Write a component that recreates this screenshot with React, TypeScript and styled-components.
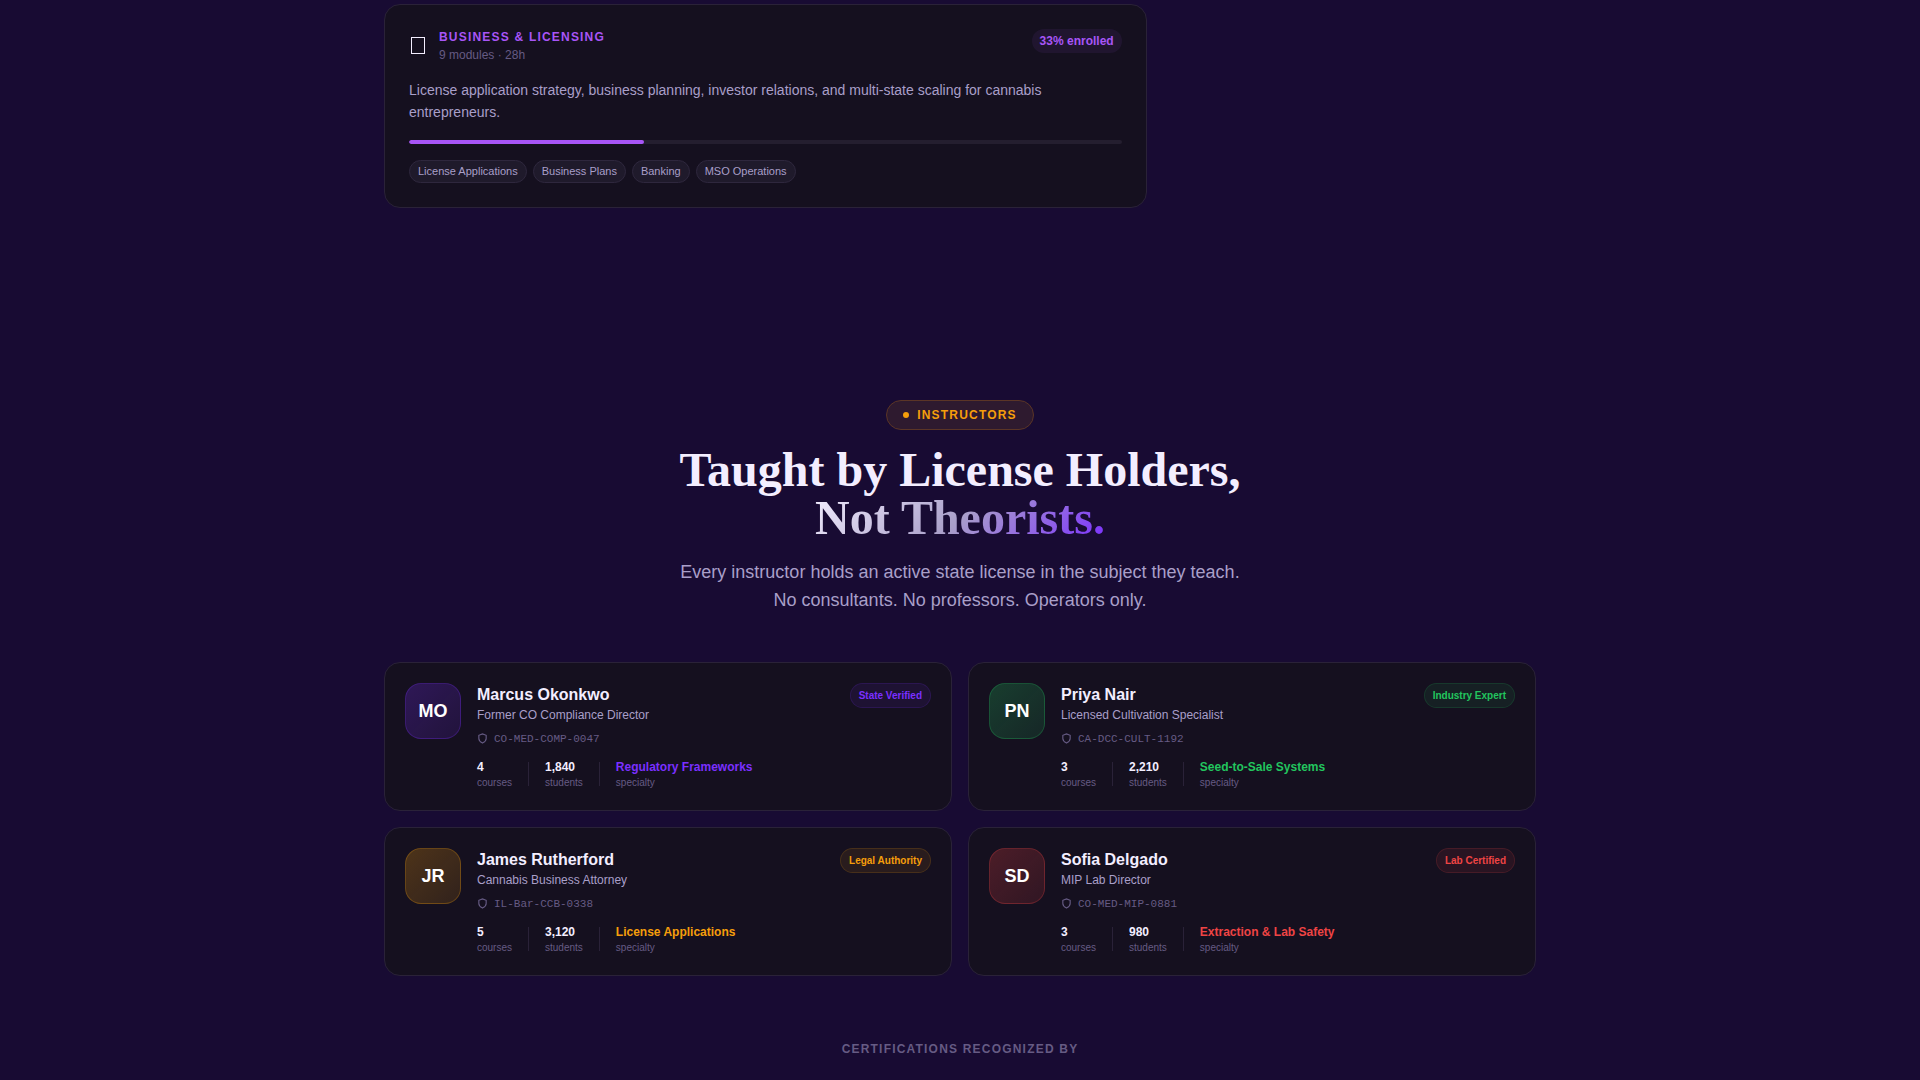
import React from "react";
import styled, { createGlobalStyle } from "styled-components";

const Global = createGlobalStyle`
  *, *::before, *::after { box-sizing: border-box; }
  html { background: #180b33; }
  body {
    margin: 0;
    color: #f3eeff;
    font-family: "Liberation Sans", Arial, sans-serif;
    overflow: hidden;
  }
  h2, h3, p, ul, dl, dd { margin: 0; padding: 0; }
`;

const Page = styled.main`
  max-width: 1200px;
  margin: 0 auto;
  padding: 4px 24px 20px;
`;

const TrackGrid = styled.section`
  display: grid;
  grid-template-columns: repeat(3, 1fr);
  gap: 16px;
`;

const Card = styled.article`
  background: #15101f;
  border: 1px solid #2a2238;
  border-radius: 16px;
`;

const TrackCard = styled(Card)`
  grid-column: span 2;
  padding: 24px;
`;

const TrackHeader = styled.header`
  display: flex;
  justify-content: space-between;
  align-items: flex-start;
  height: 34px;
  margin-bottom: 16px;
`;

const TrackTitle = styled.div`
  display: flex;
  align-items: center;
  gap: 12px;
`;

const TrackIcon = styled.span`
  width: 14px;
  height: 17px;
  margin: 0 2px 2px;
  border: 1px solid #f3eeff;
`;

const TrackLabels = styled.div`
  display: grid;
  gap: 2px;
`;

const TrackName = styled.h3`
  font-size: 12px;
  line-height: 16px;
  letter-spacing: 0.1em;
  color: #a855f7;
  text-transform: uppercase;
`;

const TrackMeta = styled.p`
  font-size: 12px;
  line-height: 16px;
  color: #665b84;
`;

const Enrolled = styled.span`
  padding: 3px 8px;
  border-radius: 12px;
  background: rgba(168, 85, 247, 0.08);
  color: #a855f7;
  font-size: 12px;
  font-weight: 700;
  line-height: 18px;
`;

const TrackText = styled.p`
  margin-bottom: 16px;
  font-size: 14px;
  line-height: 1.6;
  color: #a99fc9;
`;

const Progress = styled.div`
  height: 4px;
  margin-bottom: 16px;
  border-radius: 2px;
  background: #241e2f;
  overflow: hidden;
`;

const ProgressFill = styled.div`
  height: 100%;
  border-radius: 2px;
  background: #a855f7;
`;

const Tags = styled.ul`
  display: flex;
  flex-wrap: wrap;
  gap: 6px;
  list-style: none;
`;

const Tag = styled.li`
  padding: 2px 8px;
  border: 1px solid #2e273d;
  border-radius: 12px;
  background: #1f1a2b;
  color: #a99fc9;
  font-size: 11px;
  line-height: 17px;
`;

const Intro = styled.header`
  display: flex;
  flex-direction: column;
  align-items: center;
  margin: 192px 0 48px;
  text-align: center;
`;

const Eyebrow = styled.span`
  display: inline-flex;
  align-items: center;
  gap: 8px;
  margin-bottom: 16px;
  padding: 5px 16px;
  border: 1px solid #5b3526;
  border-radius: 15px;
  background: #2e1a2f;
  color: #f59e0b;
  font-size: 12px;
  font-weight: 700;
  line-height: 18px;
  letter-spacing: 0.1em;
  text-transform: uppercase;
`;

const Dot = styled.span`
  width: 6px;
  height: 6px;
  border-radius: 50%;
  background: currentColor;
`;

const Heading = styled.h2`
  margin-bottom: 16px;
  font-family: "Liberation Serif", "Times New Roman", serif;
  font-size: 48px;
  line-height: 48px;
`;

const Fade = styled.span`
  background: linear-gradient(135deg, #f3eeff 0%, #a99fc9 50%, #7b2fff 100%);
  background-clip: text;
  -webkit-background-clip: text;
  color: transparent;
`;

const Lead = styled.p`
  font-size: 18px;
  line-height: 28px;
  color: #a99fc9;
`;

const People = styled.section`
  display: grid;
  grid-template-columns: repeat(2, 1fr);
  gap: 16px;
`;

const PersonCard = styled(Card)`
  display: flex;
  align-items: flex-start;
  gap: 16px;
  padding: 20px;
`;

const Avatar = styled.div<{ $rgb: string }>`
  display: flex;
  align-items: center;
  justify-content: center;
  flex: none;
  width: 56px;
  height: 56px;
  border: 1px solid rgba(${(p) => p.$rgb}, 0.25);
  border-radius: 16px;
  background: linear-gradient(135deg, rgba(${(p) => p.$rgb}, 0.25), rgba(${(p) => p.$rgb}, 0.13));
  color: #ffffff;
  font-size: 18px;
  font-weight: 700;
  line-height: 28px;
`;

const Details = styled.div`
  flex: 1;
  min-width: 0;
`;

const PersonTop = styled.div`
  display: flex;
  justify-content: space-between;
  align-items: flex-start;
`;

const PersonName = styled.h3`
  font-size: 16px;
  line-height: 24px;
`;

const Role = styled.p`
  font-size: 12px;
  line-height: 16px;
  color: #a99fc9;
`;

const Badge = styled.span<{ $rgb: string }>`
  padding: 4px 8px;
  border: 1px solid rgba(${(p) => p.$rgb}, 0.15);
  border-radius: 13px;
  background: rgba(${(p) => p.$rgb}, 0.09);
  color: rgb(${(p) => p.$rgb});
  font-size: 10px;
  font-weight: 700;
  line-height: 15px;
`;

const License = styled.p`
  display: flex;
  align-items: center;
  gap: 6px;
  margin: 6px 0 10px;
  color: #665b84;
  font-family: "Liberation Mono", monospace;
  font-size: 11px;
  line-height: 20px;
`;

const Stats = styled.dl`
  display: flex;
  align-items: center;
  gap: 16px;
`;

const Stat = styled.div`
  display: flex;
  flex-direction: column-reverse;
`;

const StatValue = styled.dd<{ $rgb?: string }>`
  color: ${(p) => (p.$rgb ? `rgb(${p.$rgb})` : "#f3eeff")};
  font-size: 12px;
  font-weight: 700;
  line-height: 16px;
`;

const StatLabel = styled.dt`
  color: #665b84;
  font-size: 10px;
  line-height: 15px;
`;

const Rule = styled.div`
  width: 1px;
  height: 24px;
  background: #2a2238;
`;

const Recognized = styled.p`
  margin-top: 64px;
  color: #665b84;
  font-size: 12px;
  font-weight: 700;
  line-height: 18px;
  letter-spacing: 0.1em;
  text-align: center;
  text-transform: uppercase;
`;

const TOPICS = ["License Applications", "Business Plans", "Banking", "MSO Operations"];
const ENROLLED = 33;

const PEOPLE = [
  { initials: "MO", name: "Marcus Okonkwo", role: "Former CO Compliance Director", license: "CO-MED-COMP-0047", courses: "4", students: "1,840", specialty: "Regulatory Frameworks", badge: "State Verified", rgb: "123, 47, 255" },
  { initials: "PN", name: "Priya Nair", role: "Licensed Cultivation Specialist", license: "CA-DCC-CULT-1192", courses: "3", students: "2,210", specialty: "Seed-to-Sale Systems", badge: "Industry Expert", rgb: "34, 197, 94" },
  { initials: "JR", name: "James Rutherford", role: "Cannabis Business Attorney", license: "IL-Bar-CCB-0338", courses: "5", students: "3,120", specialty: "License Applications", badge: "Legal Authority", rgb: "245, 158, 11" },
  { initials: "SD", name: "Sofia Delgado", role: "MIP Lab Director", license: "CO-MED-MIP-0881", courses: "3", students: "980", specialty: "Extraction & Lab Safety", badge: "Lab Certified", rgb: "239, 68, 68" },
];

const Shield = () => (
  <svg width="11" height="11" viewBox="0 0 24 24" fill="none" stroke="currentColor" strokeWidth="2.5" aria-hidden="true">
    <path d="M12 22s8-4 8-10V5l-8-3-8 3v7c0 6 8 10 8 10z" />
  </svg>
);

export default function App() {
  return (
    <>
      <Global />
      <Page>
        <TrackGrid>
          <TrackCard>
            <TrackHeader>
              <TrackTitle>
                <TrackIcon aria-hidden="true" />
                <TrackLabels>
                  <TrackName>Business &amp; Licensing</TrackName>
                  <TrackMeta>9 modules · 28h</TrackMeta>
                </TrackLabels>
              </TrackTitle>
              <Enrolled>{ENROLLED}% enrolled</Enrolled>
            </TrackHeader>
            <TrackText>
              License application strategy, business planning, investor relations, and multi-state scaling for cannabis
              entrepreneurs.
            </TrackText>
            <Progress>
              <ProgressFill style={{ width: `${ENROLLED}%` }} />
            </Progress>
            <Tags>
              {TOPICS.map((t) => (
                <Tag key={t}>{t}</Tag>
              ))}
            </Tags>
          </TrackCard>
        </TrackGrid>

        <Intro>
          <Eyebrow>
            <Dot />
            Instructors
          </Eyebrow>
          <Heading>
            Taught by License Holders,
            <br />
            <Fade>Not Theorists.</Fade>
          </Heading>
          <Lead>
            Every instructor holds an active state license in the subject they teach.
            <br />
            No consultants. No professors. Operators only.
          </Lead>
        </Intro>

        <People>
          {PEOPLE.map((p) => (
            <PersonCard key={p.name}>
              <Avatar $rgb={p.rgb}>{p.initials}</Avatar>
              <Details>
                <PersonTop>
                  <div>
                    <PersonName>{p.name}</PersonName>
                    <Role>{p.role}</Role>
                  </div>
                  <Badge $rgb={p.rgb}>{p.badge}</Badge>
                </PersonTop>
                <License>
                  <Shield />
                  {p.license}
                </License>
                <Stats>
                  <Stat>
                    <StatLabel>courses</StatLabel>
                    <StatValue>{p.courses}</StatValue>
                  </Stat>
                  <Rule />
                  <Stat>
                    <StatLabel>students</StatLabel>
                    <StatValue>{p.students}</StatValue>
                  </Stat>
                  <Rule />
                  <Stat>
                    <StatLabel>specialty</StatLabel>
                    <StatValue $rgb={p.rgb}>{p.specialty}</StatValue>
                  </Stat>
                </Stats>
              </Details>
            </PersonCard>
          ))}
        </People>

        <Recognized>Certifications recognized by</Recognized>
      </Page>
    </>
  );
}
